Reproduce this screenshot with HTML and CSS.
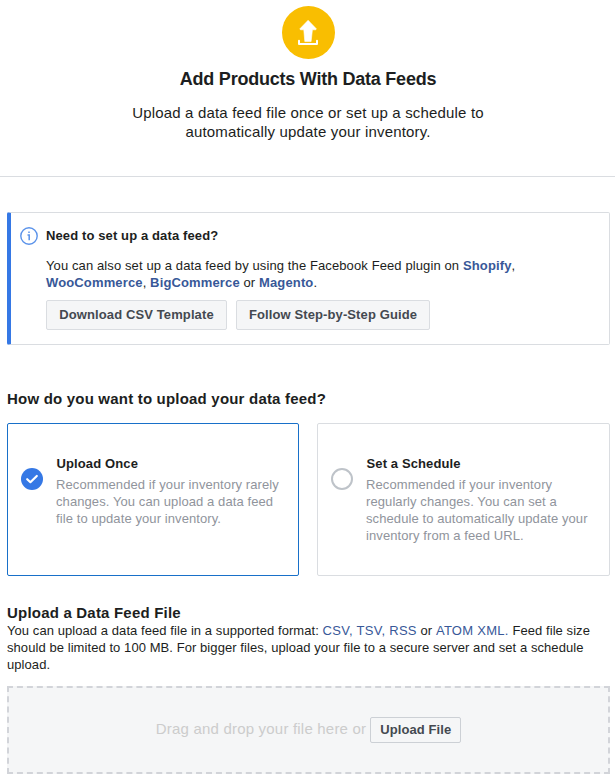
FILE: index.html
```html
<!DOCTYPE html>
<html lang="en">
<head>
  <meta charset="UTF-8">
  <title>Add Products With Data Feeds</title>
  <link rel="stylesheet" href="styles.css">
</head>
<body>
  <header class="header">
    <svg class="header-icon" width="53" height="53" viewBox="0 0 53 53">
      <circle cx="26.5" cy="26.5" r="26.5" fill="#f9be01"/>
      <path d="M26.1 14.3 L34.3 22.8 L33.8 23.8 H30.4 L29.1 35.6 H22.8 L21.8 23.8 H18.4 L17.9 22.8 Z" fill="#fff" stroke="#fff" stroke-width=".6" stroke-linejoin="round"/>
      <path d="M17 34.8 V38 H35 V34.8" fill="none" stroke="#fff" stroke-width="2" stroke-linecap="round" stroke-linejoin="round"/>
    </svg>
    <h1>Add Products With Data Feeds</h1>
    <p class="subtitle">Upload a data feed file once or set up a schedule to<br>automatically update your inventory.</p>
  </header>

  <main>
    <section class="notice">
      <svg class="notice-icon" width="18" height="18" viewBox="0 0 18 18">
        <circle cx="9" cy="9" r="8.2" fill="none" stroke="#5b93ea" stroke-width="1.4"/>
        <path d="M9 4.4 V6 M7.5 7.9 H9.2 V13.2" fill="none" stroke="#5b93ea" stroke-width="1.5"/>
      </svg>
      <div class="notice-body">
        <h3>Need to set up a data feed?</h3>
        <p>You can also set up a data feed by using the Facebook Feed plugin on <a>Shopify</a>,<br><a>WooCommerce</a>, <a>BigCommerce</a> or <a>Magento</a>.</p>
        <div class="buttons">
          <button class="btn-csv">Download CSV Template</button>
          <button class="btn-guide">Follow Step-by-Step Guide</button>
        </div>
      </div>
    </section>

    <h2>How do you want to upload your data feed?</h2>
    <div class="options">
      <div class="option selected">
        <svg class="radio" width="22" height="22" viewBox="0 0 22 22">
          <circle cx="11" cy="11" r="11" fill="#3578e5"/>
          <path d="M6.2 11.2 L9.4 14.2 L15.8 8" fill="none" stroke="#fff" stroke-width="2.2" stroke-linecap="round" stroke-linejoin="round"/>
        </svg>
        <div>
          <h3>Upload Once</h3>
          <p>Recommended if your inventory rarely<br>changes. You can upload a data feed<br>file to update your inventory.</p>
        </div>
      </div>
      <div class="option">
        <svg class="radio" width="22" height="22" viewBox="0 0 22 22">
          <circle cx="11" cy="11" r="10" fill="#fff" stroke="#bec3c9" stroke-width="2"/>
        </svg>
        <div>
          <h3>Set a Schedule</h3>
          <p>Recommended if your inventory<br>regularly changes. You can set a<br>schedule to automatically update your<br>inventory from a feed URL.</p>
        </div>
      </div>
    </div>

    <h2 class="file-title">Upload a Data Feed File</h2>
    <p class="file-text">You can upload a data feed file in a supported format: <a>CSV, TSV, RSS</a> or <a>ATOM XML.</a> Feed file size<br>should be limited to 100 MB. For bigger files, upload your file to a secure server and set a schedule<br>upload.</p>

    <div class="dropzone">
      <span>Drag and drop your file here or</span>
      <button class="btn-upload">Upload File</button>
    </div>
  </main>
</body>
</html>
```
FILE: styles.css
```css
* { box-sizing: border-box; }
body {
  margin: 0;
  font-family: "Liberation Sans", Arial, sans-serif;
  font-size: 13px;
  line-height: 17px;
  letter-spacing: 0.09px;
  color: #1c1e21;
  background: #fff;
}
h1, h2, h3, p { margin: 0; white-space: nowrap; }
a { color: #385898; }
svg { display: block; flex-shrink: 0; }

.header {
  height: 177px;
  padding: 6px 0 0 1px;
  border-bottom: 1px solid #dadde1;
  text-align: center;
}
.header-icon { margin-left: 281px; }
h1 {
  margin-top: 9px;
  font-size: 18px;
  line-height: 22px;
  letter-spacing: -0.23px;
}
.subtitle {
  margin-top: 13px;
  font-size: 15px;
  line-height: 19px;
  letter-spacing: 0.17px;
}

main { padding: 35px 5px 0 7px; }
.notice {
  display: flex;
  height: 133px;
  padding: 14px 0 0 9px;
  border: 1px solid #dadde1;
  border-left: 4px solid #3578e5;
  border-radius: 2px;
}
.notice-body { margin-left: 8px; }
h3 { font-size: 13px; line-height: 17px; letter-spacing: 0.12px; }
.notice p { margin-top: 13px; letter-spacing: 0.11px; }
.notice a { font-weight: bold; letter-spacing: 0.14px; }
.buttons { display: flex; gap: 9px; margin-top: 9px; }
button {
  height: 30px;
  padding: 0 0 2px;
  border: 1px solid #dadde1;
  border-radius: 2px;
  background: #f5f6f7;
  color: #444950;
  font: bold 13px "Liberation Sans", Arial, sans-serif;
  letter-spacing: 0.11px;
}
.btn-csv { width: 181px; }
.btn-guide { width: 194px; }

h2 {
  margin-top: 44px;
  font-size: 15px;
  line-height: 20px;
  letter-spacing: 0.2px;
}
.options {
  display: grid;
  grid-template-columns: 292px 293px;
  gap: 18px;
  margin-top: 14px;
}
.option {
  display: flex;
  height: 153px;
  padding: 31px 0 0 13px;
  border: 1px solid #dadde1;
  border-radius: 2px;
}
.option.selected { border-color: #1870c9; }
.radio { margin: 13px 13px 0 0; }
.option h3 { padding-left: 0.5px; }
.option p { margin-top: 4px; color: #90949c; }

.file-title { margin-top: 27px; line-height: 19px; }
.file-text { letter-spacing: 0.07px; }
.file-text a { letter-spacing: 0.28px; }
.dropzone {
  display: flex;
  align-items: center;
  justify-content: center;
  gap: 4px;
  height: 88px;
  margin-top: 13px;
  border: 2px dashed #d2d4d9;
  background: #f5f6f7;
  color: #ccc;
  font-size: 15px;
  letter-spacing: 0.2px;
}
.dropzone span { padding-bottom: 3px; }
.btn-upload {
  width: 91px;
  height: 26px;
  border-color: #ccd0d5;
  letter-spacing: 0.1px;
}
```
